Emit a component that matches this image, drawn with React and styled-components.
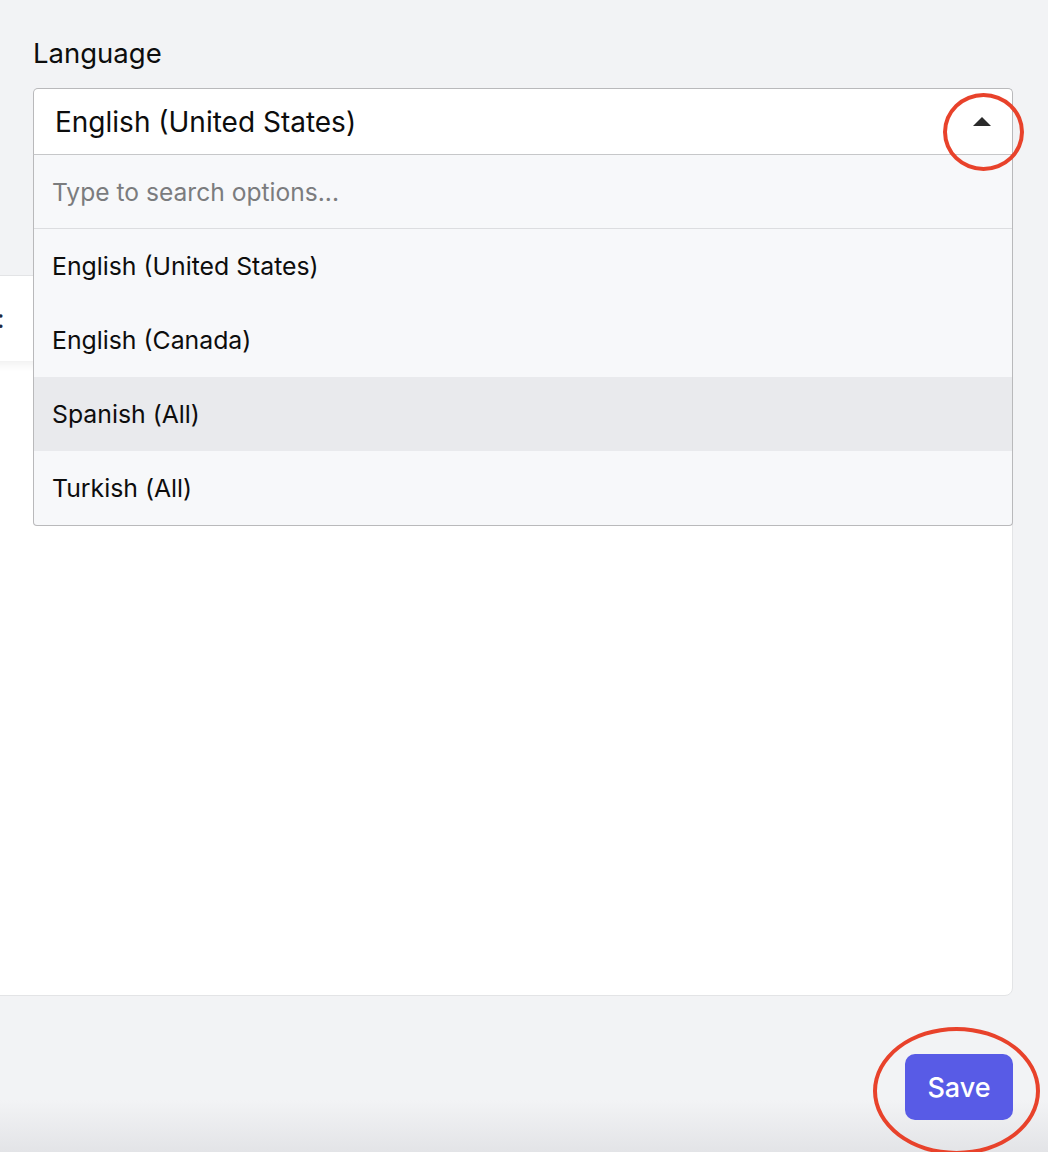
import React from 'react'
import styled, { createGlobalStyle } from 'styled-components'

const GlobalStyle = createGlobalStyle`
  html, body {
    margin: 0;
    padding: 0;
    background: #f2f3f5;
  }
  body {
    font-family: Inter, "Liberation Sans", sans-serif;
    color: #111;
  }
`

const Page = styled.div`
  position: relative;
  height: 1152px;
  overflow: hidden;
  padding: 0 35px 0 33px;
  box-sizing: border-box;
  display: flex;
  flex-direction: column;
  background: linear-gradient(to bottom, #f2f3f5 0, #f2f3f5 1100px, #e3e4e7 1152px);
`

const Field = styled.div`
  position: relative;
  z-index: 2;
  padding-top: 36px;
`

const Label = styled.label`
  display: block;
  font-size: 27.5px;
  line-height: 34px;
  color: #0d0d0d;
  margin-bottom: 18px;
`

const SelectBox = styled.div`
  position: relative;
  height: 67px;
  box-sizing: border-box;
  background: #fff;
  border: 1px solid #b9b9bb;
  border-bottom-color: #c6c7c9;
  border-radius: 5px 5px 0 0;
  display: flex;
  align-items: center;
  padding: 0 20px 0 21px;
  font-size: 28px;
  color: #0d0d0d;
`

const Value = styled.span`
  flex: 1;
`

const Caret = styled.span`
  width: 0;
  height: 0;
  border-left: 9px solid transparent;
  border-right: 9px solid transparent;
  border-bottom: 9px solid #2b2b2b;
  margin-right: 1px;
`

const Menu = styled.div`
  position: absolute;
  left: -1px;
  right: -1px;
  top: calc(100% + 1px);
  background: #f7f8fa;
  border: 1px solid #b9b9bb;
  border-top: 0;
  border-radius: 0 0 4px 4px;
`

const Search = styled.div`
  height: 73px;
  display: flex;
  align-items: center;
  padding-left: 18px;
  border-bottom: 1px solid #dcdde0;
  font-size: 24.6px;
  color: #7b7c7e;
`

const Option = styled.div`
  height: 74px;
  display: flex;
  align-items: center;
  padding-left: 18px;
  font-size: 24.8px;
  color: #0d0d0d;
  background: ${(p) => (p.active ? '#e9eaed' : 'transparent')};
`

const Card = styled.div`
  margin: 120px 0 0 -60px;
  height: 719px;
  background: #fff;
  border: 1px solid #e3e4e6;
  border-radius: 8px;
  display: flex;
  flex-direction: column;
  overflow: hidden;
`

const CardHeader = styled.div`
  height: 85px;
  display: flex;
  align-items: center;
  background: #fff;
  box-shadow: 0 4px 8px rgba(0, 0, 0, 0.06);
  font-size: 26px;
  color: #1f2a44;
  padding-left: 23px;
`

const Footer = styled.div`
  display: flex;
  justify-content: flex-end;
  margin-top: 58px;
`

const SaveButton = styled.button`
  width: 108px;
  height: 66px;
  border: 0;
  border-radius: 10px;
  background: #585be6;
  color: #fff;
  font-family: Inter, "Liberation Sans", sans-serif;
  font-size: 27px;
  font-weight: 500;
`

const Ring = styled.div`
  position: absolute;
  z-index: 5;
  box-sizing: border-box;
  border: 4px solid #e8422b;
  border-radius: 50%;
  pointer-events: none;
  left: ${(p) => p.x}px;
  top: ${(p) => p.y}px;
  width: ${(p) => p.w}px;
  height: ${(p) => p.h}px;
`

const options = ['English (United States)', 'English (Canada)', 'Spanish (All)', 'Turkish (All)']

export default function App() {
  return (
    <>
      <GlobalStyle />
      <Page>
        <Field>
          <Label>Language</Label>
          <SelectBox>
            <Value>English (United States)</Value>
            <Caret />
            <Menu>
              <Search>Type to search options...</Search>
              {options.map((o) => (
                <Option key={o} active={o === 'Spanish (All)'}>
                  {o}
                </Option>
              ))}
            </Menu>
          </SelectBox>
        </Field>
        <Card>
          <CardHeader>:</CardHeader>
        </Card>
        <Footer>
          <SaveButton>Save</SaveButton>
        </Footer>
        <Ring x={943} y={93} w={81} h={78} />
        <Ring x={873} y={1027} w={167} h={128} />
      </Page>
    </>
  )
}
